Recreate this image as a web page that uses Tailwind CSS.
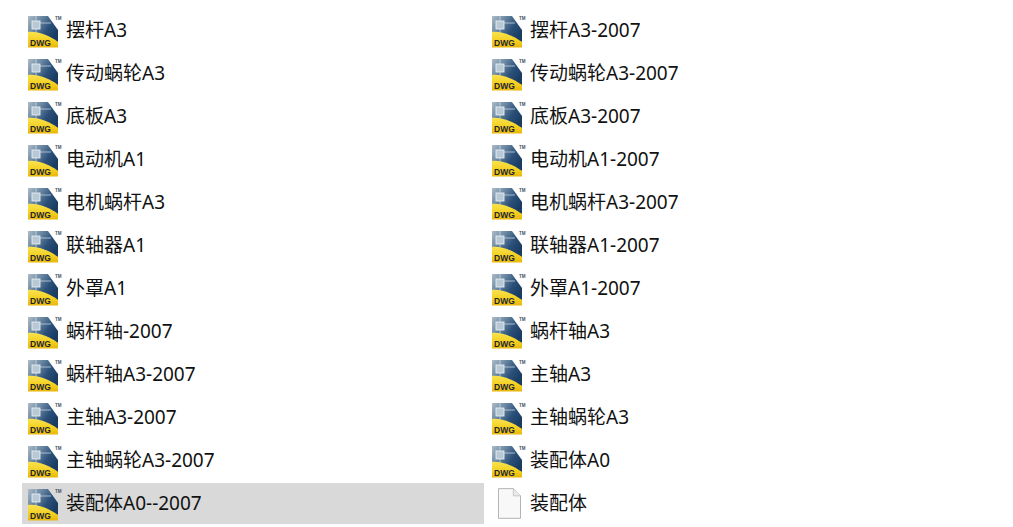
<!DOCTYPE html>
<html lang="zh">
<head>
<meta charset="UTF-8">
<title>DWG files</title>
<script src="https://cdn.jsdelivr.net/npm/@tailwindcss/browser@4"></script>
</head>
<body class="bg-white overflow-hidden">
<!-- shared dwg icon -->
<svg width="0" height="0" class="absolute">
  <defs>
    <linearGradient id="blue" x1="0" y1="0" x2="1" y2="0.6">
      <stop offset="0" stop-color="#aebcc8"/><stop offset="0.35" stop-color="#6d8aa4"/><stop offset="0.7" stop-color="#2b5079"/><stop offset="1" stop-color="#1a3c62"/>
    </linearGradient>
    <linearGradient id="gold" x1="0" y1="0" x2="0" y2="1">
      <stop offset="0" stop-color="#f9e24e"/><stop offset="0.6" stop-color="#f4ce1e"/><stop offset="1" stop-color="#e9b60c"/>
    </linearGradient>
    <symbol id="dwg" viewBox="0 0 34 34">
      <path d="M0 2H20L30 16V28L0 20Z" fill="url(#blue)"/>
      <rect x="4" y="7" width="8" height="8" fill="#b9c8d5" stroke="#e6edf3" stroke-width="0.9"/>
      <path d="M12 9H23M8 2V7M8 15V19" fill="none" stroke="#d5e0ea" stroke-width="0.7"/>
      <path d="M0 18C10 17 22 22 30 28V33.5H0Z" fill="url(#gold)"/>
      <text x="2" y="32" font-family="Liberation Sans, sans-serif" font-size="8.5" font-weight="700" fill="#1c2733">DWG</text>
      <text x="27" y="5.5" font-family="Liberation Sans, sans-serif" font-size="4.5" font-weight="700" fill="#3f4f60">TM</text>
    </symbol>
    <symbol id="blank" viewBox="0 0 24 32">
      <path d="M0.5 0.5H16L23.5 8V31.5H0.5Z" fill="#f8f8f8" stroke="#b0b0b0"/>
      <path d="M16 0.5V8H23.5" fill="#ebebeb" stroke="#c6c6c6"/>
    </symbol>
  </defs>
</svg>

<div class="grid grid-cols-[462px_462px] gap-x-[2px] pl-[22px] pt-[9px] text-[19px] text-[#111] font-['Noto_Sans','Noto_Sans_CJK_SC',sans-serif]">
  <div class="flex items-center gap-[4px] h-[43px] pl-[6px]"><svg class="w-[34px] h-[34px] shrink-0"><use href="#dwg"/></svg><span>摆杆A3</span></div>
  <div class="flex items-center gap-[4px] h-[43px] pl-[6px]"><svg class="w-[34px] h-[34px] shrink-0"><use href="#dwg"/></svg><span>摆杆A3-2007</span></div>
  <div class="flex items-center gap-[4px] h-[43px] pl-[6px]"><svg class="w-[34px] h-[34px] shrink-0"><use href="#dwg"/></svg><span>传动蜗轮A3</span></div>
  <div class="flex items-center gap-[4px] h-[43px] pl-[6px]"><svg class="w-[34px] h-[34px] shrink-0"><use href="#dwg"/></svg><span>传动蜗轮A3-2007</span></div>
  <div class="flex items-center gap-[4px] h-[43px] pl-[6px]"><svg class="w-[34px] h-[34px] shrink-0"><use href="#dwg"/></svg><span>底板A3</span></div>
  <div class="flex items-center gap-[4px] h-[43px] pl-[6px]"><svg class="w-[34px] h-[34px] shrink-0"><use href="#dwg"/></svg><span>底板A3-2007</span></div>
  <div class="flex items-center gap-[4px] h-[43px] pl-[6px]"><svg class="w-[34px] h-[34px] shrink-0"><use href="#dwg"/></svg><span>电动机A1</span></div>
  <div class="flex items-center gap-[4px] h-[43px] pl-[6px]"><svg class="w-[34px] h-[34px] shrink-0"><use href="#dwg"/></svg><span>电动机A1-2007</span></div>
  <div class="flex items-center gap-[4px] h-[43px] pl-[6px]"><svg class="w-[34px] h-[34px] shrink-0"><use href="#dwg"/></svg><span>电机蜗杆A3</span></div>
  <div class="flex items-center gap-[4px] h-[43px] pl-[6px]"><svg class="w-[34px] h-[34px] shrink-0"><use href="#dwg"/></svg><span>电机蜗杆A3-2007</span></div>
  <div class="flex items-center gap-[4px] h-[43px] pl-[6px]"><svg class="w-[34px] h-[34px] shrink-0"><use href="#dwg"/></svg><span>联轴器A1</span></div>
  <div class="flex items-center gap-[4px] h-[43px] pl-[6px]"><svg class="w-[34px] h-[34px] shrink-0"><use href="#dwg"/></svg><span>联轴器A1-2007</span></div>
  <div class="flex items-center gap-[4px] h-[43px] pl-[6px]"><svg class="w-[34px] h-[34px] shrink-0"><use href="#dwg"/></svg><span>外罩A1</span></div>
  <div class="flex items-center gap-[4px] h-[43px] pl-[6px]"><svg class="w-[34px] h-[34px] shrink-0"><use href="#dwg"/></svg><span>外罩A1-2007</span></div>
  <div class="flex items-center gap-[4px] h-[43px] pl-[6px]"><svg class="w-[34px] h-[34px] shrink-0"><use href="#dwg"/></svg><span>蜗杆轴-2007</span></div>
  <div class="flex items-center gap-[4px] h-[43px] pl-[6px]"><svg class="w-[34px] h-[34px] shrink-0"><use href="#dwg"/></svg><span>蜗杆轴A3</span></div>
  <div class="flex items-center gap-[4px] h-[43px] pl-[6px]"><svg class="w-[34px] h-[34px] shrink-0"><use href="#dwg"/></svg><span>蜗杆轴A3-2007</span></div>
  <div class="flex items-center gap-[4px] h-[43px] pl-[6px]"><svg class="w-[34px] h-[34px] shrink-0"><use href="#dwg"/></svg><span>主轴A3</span></div>
  <div class="flex items-center gap-[4px] h-[43px] pl-[6px]"><svg class="w-[34px] h-[34px] shrink-0"><use href="#dwg"/></svg><span>主轴A3-2007</span></div>
  <div class="flex items-center gap-[4px] h-[43px] pl-[6px]"><svg class="w-[34px] h-[34px] shrink-0"><use href="#dwg"/></svg><span>主轴蜗轮A3</span></div>
  <div class="flex items-center gap-[4px] h-[43px] pl-[6px]"><svg class="w-[34px] h-[34px] shrink-0"><use href="#dwg"/></svg><span>主轴蜗轮A3-2007</span></div>
  <div class="flex items-center gap-[4px] h-[43px] pl-[6px]"><svg class="w-[34px] h-[34px] shrink-0"><use href="#dwg"/></svg><span>装配体A0</span></div>
  <div class="flex items-center gap-[4px] h-[41px] my-[1px] pl-[6px] bg-[#d9d9d9]"><svg class="w-[34px] h-[34px] shrink-0"><use href="#dwg"/></svg><span>装配体A0--2007</span></div>
  <div class="flex items-center gap-[4px] h-[43px] pl-[6px]"><svg class="w-[34px] h-[34px] shrink-0"><use href="#blank" x="6" y="1" width="23" height="31"/></svg><span>装配体</span></div>
</div>
</body>
</html>
